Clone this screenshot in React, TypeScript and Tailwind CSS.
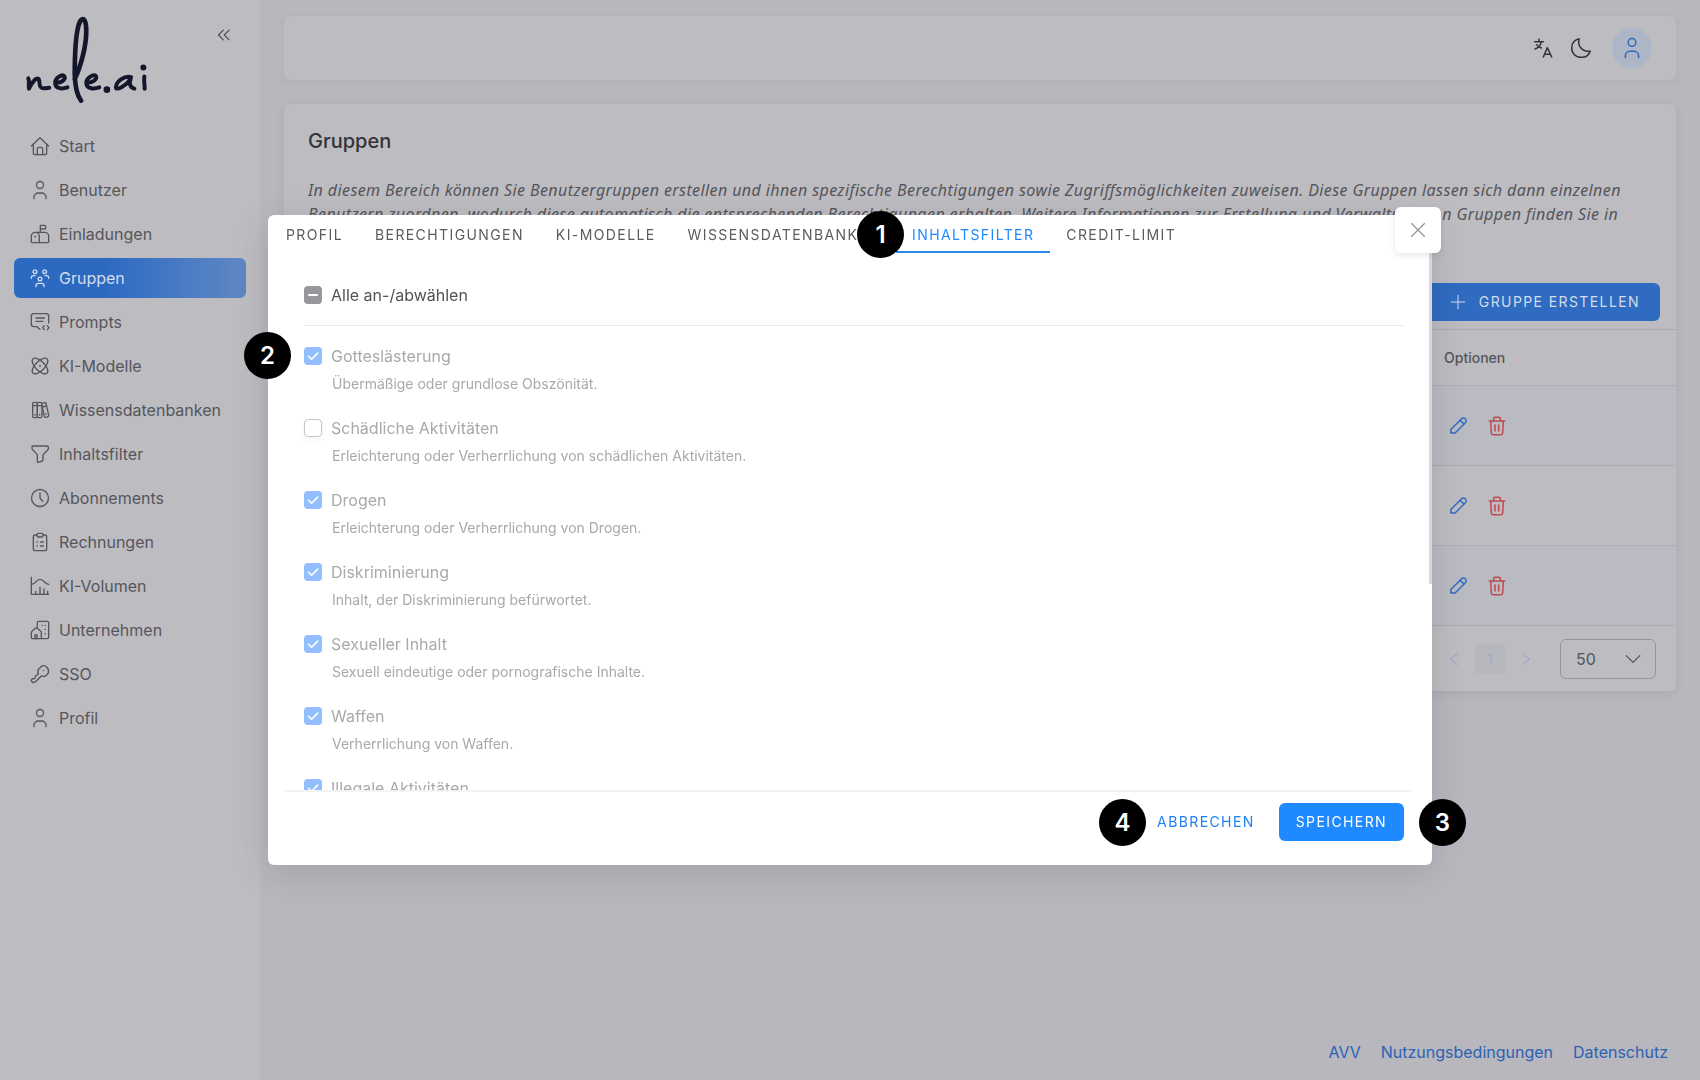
import React from "react";

type IconProps = { children: React.ReactNode; className?: string; strokeWidth?: number };

function Icon({ children, className = "size-[18px]", strokeWidth = 4 }: IconProps) {
  return (
    <svg
      viewBox="0 0 54 54"
      className={`shrink-0 overflow-visible ${className}`}
      fill="none"
      stroke="currentColor"
      strokeWidth={strokeWidth}
      strokeLinecap="round"
      strokeLinejoin="round"
      aria-hidden="true"
    >
      {children}
    </svg>
  );
}

const userShape = (
  <>
    <circle cx="27" cy="12" r="10.5" />
    <path d="M9 53v-4a13 13 0 0 1 13-13h10a13 13 0 0 1 13 13v4" />
  </>
);

const navItems: { label: string; icon: React.ReactNode; active?: boolean }[] = [
  {
    label: "Start",
    icon: (
      <>
        <path d="M1 27 27 2l26 25" />
        <path d="M7 22v25q0 6 6 6h28q6 0 6-6V22" />
        <path d="M19 53V35q0-4 4-4h8q4 0 4 4v18" />
      </>
    ),
  },
  { label: "Benutzer", icon: userShape },
  {
    label: "Einladungen",
    icon: (
      <>
        <path d="M13 22h29a11 11 0 0 1 11 11v17q0 3-3 3H4q-3 0-3-3V34a12 12 0 0 1 24 0v19" />
        <path d="M28 22V1h13q3 0 3 3v5q0 3-3 3H28" />
        <path d="M11 35h3" />
      </>
    ),
  },
  {
    label: "Gruppen",
    active: true,
    icon: (
      <>
        <circle cx="12" cy="8" r="5.5" />
        <circle cx="41" cy="8" r="5.5" />
        <circle cx="27" cy="30" r="5.5" />
        <path d="M1 28v-2q0-6 6-6h5M53 28v-2q0-6-6-6h-5M15 53v-3q0-7 7-7h10q7 0 7 7v3" />
      </>
    ),
  },
  {
    label: "Prompts",
    icon: (
      <>
        <path d="M53 30V10a8 8 0 0 0-8-8H9a8 8 0 0 0-8 8v23a8 8 0 0 0 8 8h8l10 8" />
        <path d="M15 15h25M15 25h20" />
        <path d="m40 38-5 6 5 6M49 38l5 6-5 6" />
      </>
    ),
  },
  {
    label: "KI-Modelle",
    icon: (
      <>
        <ellipse cx="27" cy="27" rx="30" ry="14" transform="rotate(45 27 27)" />
        <ellipse cx="27" cy="27" rx="30" ry="14" transform="rotate(-45 27 27)" />
        <circle cx="27" cy="27" r="1" />
      </>
    ),
  },
  {
    label: "Wissensdatenbanken",
    icon: (
      <>
        <rect x="5" y="4" width="14" height="46" rx="4" />
        <rect x="19" y="4" width="14" height="46" rx="4" />
        <path d="m33 8 8-3q3-1 4 2l8 35q1 4-3 5l-5 2q-4 1-5-3l-7-33" />
        <path d="M5 14h14M19 14h14M35 18l11-3M12 40v2M26 40v2M45 38v2" />
      </>
    ),
  },
  {
    label: "Inhaltsfilter",
    icon: <path d="M5 3h44q3 0 3 3v5q0 2-2 4L36 29v15q0 3-2 4l-12 4q-3 1-3-3V29L5 14q-2-2-2-4V5q0-2 2-2Z" />,
  },
  {
    label: "Abonnements",
    icon: (
      <>
        <circle cx="27" cy="27" r="25.5" />
        <path d="M27 12v15l8 10" />
      </>
    ),
  },
  {
    label: "Rechnungen",
    icon: (
      <>
        <path d="M18 6h-5q-6 0-6 6v35q0 6 6 6h28q6 0 6-6V12q0-6-6-6h-5" />
        <rect x="18" y="1" width="18" height="11" rx="4" />
        <path d="M18 27h1M29 27h8M18 39h1M29 39h8" />
      </>
    ),
  },
  {
    label: "KI-Volumen",
    icon: (
      <>
        <path d="M1 1v51h52" />
        <path d="M2 22q7-1 13-8t12-7 13 7 13 8" />
        <path d="M14 43v8M27 31v20M39 36v15M50 43v8" />
      </>
    ),
  },
  {
    label: "Unternehmen",
    icon: (
      <>
        <path d="M19 18V5q0-4 4-4h26q4 0 4 4v44q0 4-4 4H4q-3 0-3-3V35q0-2 2-4l10-9q3-2 6 0l10 9q2 2 2 4v18" />
        <path d="M12 53V42h6v11M33 13h1M42 13h1M42 25h1M42 38h1" />
      </>
    ),
  },
  {
    label: "SSO",
    icon: (
      <>
        <path d="M22 27q-4-9 2-16l6-6q9-7 17 1t5 18l-5 6q-7 7-16 3L16 48q-6 6-12 4-5-5-1-10l9-2 1-6Z" />
        <path d="M37 16h.5" />
      </>
    ),
  },
  { label: "Profil", icon: userShape },
];

const filters = [
  { label: "Gotteslästerung", text: "Übermäßige oder grundlose Obszönität.", checked: true },
  { label: "Schädliche Aktivitäten", text: "Erleichterung oder Verherrlichung von schädlichen Aktivitäten.", checked: false },
  { label: "Drogen", text: "Erleichterung oder Verherrlichung von Drogen.", checked: true },
  { label: "Diskriminierung", text: "Inhalt, der Diskriminierung befürwortet.", checked: true },
  { label: "Sexueller Inhalt", text: "Sexuell eindeutige oder pornografische Inhalte.", checked: true },
  { label: "Waffen", text: "Verherrlichung von Waffen.", checked: true },
  { label: "Illegale Aktivitäten", text: "", checked: true },
];

const tabs = ["Profil", "Berechtigungen", "KI-Modelle", "Wissensdatenbanken", "Inhaltsfilter", "Credit-Limit"];

function Logo() {
  return (
    <svg
      viewBox="77 48 365 262"
      className="h-[87px] w-[121px]"
      fill="none"
      stroke="#14172b"
      strokeWidth="12"
      strokeLinecap="round"
      strokeLinejoin="round"
      role="img"
      aria-label="nele.ai"
    >
      <path d="M84 236c4 10 0 21 2 31 8-17 20-34 28-30 8 5-3 29 16 29 8 0 12-1 17-2" />
      <path d="M167 248c14 3 31-8 26-18-7-8-28 3-28 20 1 19 22 18 37 13" />
      <path d="M224 238c17-35 39-108 34-160-3-29-16-27-23 0-9 34-11 108-11 146 1 36 6 62 19 79" strokeWidth="14" />
      <path d="M261 248c14 3 32-9 27-19-7-7-29 4-29 21 1 19 24 18 39 13" />
      <path d="M394 232c-19-5-44 11-46 31 2 12 32-6 45-26-6 13-3 26 11 30" />
      <path d="M434 230c-2 13 1 26 1 37" />
      <circle cx="321" cy="270" r="10" fill="#14172b" stroke="none" />
      <circle cx="431" cy="203" r="9" fill="#14172b" stroke="none" />
    </svg>
  );
}

function Marker({ n, className }: { n: number; className: string }) {
  return (
    <span
      className={`absolute z-20 flex size-[47px] items-center justify-center rounded-full bg-black font-['Inter',sans-serif] text-2xl font-semibold text-white ${className}`}
    >
      {n}
    </span>
  );
}

function Checkbox({ id, checked, mixed = false }: { id: string; checked: boolean; mixed?: boolean }) {
  const tone = mixed
    ? "bg-[#98989c]"
    : checked
      ? "bg-[#93bffd]"
      : "border border-[#c4c4c8] bg-white shadow-[0_2px_6px_rgba(0,0,0,0.05)]";
  return (
    <span className="grid size-[18px] shrink-0">
      <input
        id={id}
        type="checkbox"
        defaultChecked={checked}
        className={`col-start-1 row-start-1 size-[18px] appearance-none rounded ${tone}`}
      />
      {(checked || mixed) && (
        <svg
          viewBox="0 0 18 18"
          className="pointer-events-none col-start-1 row-start-1 size-[18px]"
          fill="none"
          stroke="white"
          strokeWidth={mixed ? 2 : 1.6}
          strokeLinecap="round"
          strokeLinejoin="round"
          aria-hidden="true"
        >
          <path d={mixed ? "M5 9h8" : "m4.6 9.3 3 3 6-6.2"} />
        </svg>
      )}
    </span>
  );
}

function Sidebar() {
  return (
    <aside className="w-[260px] shrink-0 bg-[#bdbcc1] px-3.5">
      <div className="flex items-start justify-between pt-4 pr-4 pl-3">
        <Logo />
        <button type="button" aria-label="Menü einklappen" className="mt-3 text-[#4c4c52]">
          <Icon className="h-3.5 w-3" strokeWidth={5}>
            <path d="M24 5 2 27l22 22M50 5 28 27l22 22" />
          </Icon>
        </button>
      </div>
      <nav className="mt-[23px] flex flex-col gap-1">
        {navItems.map((item) => (
          <a
            key={item.label}
            href="#"
            className={`flex h-10 items-center gap-2.5 rounded-md pl-[17px] text-base ${
              item.active ? "bg-linear-to-r from-[#2c6ac2] from-40% to-[#6088c4] text-[#d3dcea]" : "text-[#56565b]"
            }`}
          >
            <Icon>{item.icon}</Icon>
            {item.label}
          </a>
        ))}
      </nav>
    </aside>
  );
}

function TopBar() {
  return (
    <header className="flex h-16 items-center justify-end rounded-md bg-[#bdbcc1] pr-6 text-[#333338] shadow-[0_2px_8px_rgba(60,50,90,0.05)]">
      <button type="button" aria-label="Sprache" className="mr-[19px]">
        <Icon strokeWidth={4.5}>
          <path d="M2 8h26M15 1v7M22 8c-2 12-9 19-19 22M8 17c3 5 8 8 14 10" />
          <path d="m28 54 12-28 13 28M32 46h17" />
        </Icon>
      </button>
      <button type="button" aria-label="Dunkelmodus" className="mr-[21px]">
        <Icon className="size-5" strokeWidth={4}>
          <path d="M22 2C17 20 28 37 52 36 47 47 37 53 27 52 12 52 1 40 2 26 2 14 10 4 22 2Z" />
        </Icon>
      </button>
      <button type="button" aria-label="Konto" className="flex size-10 items-center justify-center rounded-full bg-[#adb6c6] text-[#2c6ac2]">
        <Icon className="size-5">{userShape}</Icon>
      </button>
    </header>
  );
}

function GroupsCard() {
  return (
    <section className="mt-6 rounded-md bg-[#bdbcc1] shadow-[0_3px_10px_rgba(60,50,90,0.09)]">
      <div className="px-6 pt-[23px]">
        <h1 className="text-xl leading-7 font-medium text-[#333338]">Gruppen</h1>
        <p className="mt-[23px] h-[72px] overflow-hidden font-['Noto_Sans','Inter',sans-serif] text-base leading-6 tracking-wide whitespace-nowrap text-[#55555a] italic">
          In diesem Bereich können Sie Benutzergruppen erstellen und ihnen spezifische Berechtigungen sowie
          Zugriffsmöglichkeiten zuweisen. Diese Gruppen lassen sich dann einzelnen
          <br />
          Benutzern zuordnen, wodurch diese automatisch die entsprechenden Berechtigungen erhalten. Weitere
          Informationen zur Erstellung und Verwaltung von Gruppen finden Sie in
        </p>
      </div>
      <div className="mt-[33px] flex justify-end pr-4">
        <button
          type="button"
          className="flex h-[38px] items-center gap-3.5 rounded-md bg-[#2f6cc1] pr-5 pl-7 text-sm tracking-widest text-[#d3dcea] uppercase"
        >
          <Icon className="size-3.5" strokeWidth={4}>
            <path d="M27 1v52M1 27h52" />
          </Icon>
          Gruppe erstellen
        </button>
      </div>
      <table className="mt-2 w-full border-collapse">
        <thead>
          <tr className="h-14 border-y border-[#abaab0]">
            <th scope="col" className="pl-[1160px] text-left text-sm font-medium text-[#55555a]">
              Optionen
            </th>
          </tr>
        </thead>
        <tbody>
          {[0, 1, 2].map((row) => (
            <tr key={row} className="h-20 border-b border-[#abaab0] odd:bg-[#b9bac2]">
              <td className="pl-[1166px]">
                <div className="flex items-center gap-[21px]">
                  <button type="button" aria-label="Bearbeiten" className="text-[#2c6ac2]">
                    <Icon className="size-[17px]" strokeWidth={4.5}>
                      <path d="M3 51V39L36 6q7-6 13 0 5 6 0 12L16 51Z" />
                      <path d="m32 10 12 12" />
                    </Icon>
                  </button>
                  <button type="button" aria-label="Löschen" className="text-[#be4a50]">
                    <Icon className="size-[18px]" strokeWidth={4.5}>
                      <path d="M4 12h46M17 12V5q0-4 4-4h12q4 0 4 4v7M8 12l2 36q0 5 5 5h24q5 0 5-5l2-36M21 24v18M32 24v18" />
                    </Icon>
                  </button>
                </div>
              </td>
            </tr>
          ))}
        </tbody>
      </table>
      <div className="flex h-[65px] items-center justify-end pr-5 text-[#9aa8c6]">
        <button type="button" aria-label="Zurück" className="flex size-[30px] items-center justify-center rounded">
          <Icon className="size-3.5" strokeWidth={4}>
            <path d="M40 5 14 27l26 22" />
          </Icon>
        </button>
        <button type="button" className="ml-1.5 flex size-[30px] items-center justify-center rounded bg-[#b7b7be] text-xs">
          1
        </button>
        <button type="button" aria-label="Weiter" className="ml-1.5 flex size-[30px] items-center justify-center rounded">
          <Icon className="size-3.5" strokeWidth={4}>
            <path d="m14 5 26 22-26 22" />
          </Icon>
        </button>
        <div className="ml-[19px] grid text-[#55555a]">
          <select
            aria-label="Einträge pro Seite"
            className="col-start-1 row-start-1 h-10 w-24 appearance-none rounded-md border border-[#96959b] bg-transparent pl-[15px] text-base"
          >
            <option>50</option>
          </select>
          <Icon className="pointer-events-none col-start-1 row-start-1 mr-4 size-3.5 self-center justify-self-end" strokeWidth={5}>
            <path d="m1 14 26 26 26-26" />
          </Icon>
        </div>
      </div>
    </section>
  );
}

function FilterDialog() {
  return (
    <div className="fixed inset-0 flex items-center justify-center">
      <div
        role="dialog"
        aria-modal="true"
        aria-label="Inhaltsfilter"
        className="relative flex max-h-[650px] w-full max-w-[1164px] flex-col rounded-md bg-white shadow-[0_8px_36px_rgba(0,0,0,0.12)]"
      >
        <button
          type="button"
          aria-label="Schließen"
          className="absolute -top-2 -right-[9px] z-10 flex size-[46px] items-center justify-center rounded-md bg-white text-[#929297] shadow-[0_2px_6px_rgba(0,0,0,0.1)]"
        >
          <Icon className="size-3.5" strokeWidth={4.5}>
            <path d="m2 2 50 50M52 2 2 52" />
          </Icon>
        </button>
        <div className="absolute top-9 right-0 h-[333px] w-[3px] bg-[#d8d8dc]" />
        <div className="min-h-0 overflow-hidden">
          <div role="tablist" className="flex h-[38px] items-stretch pl-0.5">
            {tabs.map((tab) => {
              const selected = tab === "Inhaltsfilter";
              return (
                <button
                  key={tab}
                  type="button"
                  role="tab"
                  aria-selected={selected}
                  className={`border-b-2 px-4 pt-[3px] text-sm tracking-widest uppercase ${
                    selected ? "border-[#2a8ae6] text-[#1f87ff]" : "border-transparent text-[#5c5c60]"
                  }`}
                >
                  {tab}
                </button>
              );
            })}
          </div>
          <div className="pt-[30px] pr-7 pl-9">
            <div className="flex h-6 items-center gap-[9px]">
              <Checkbox id="all" checked={false} mixed />
              <label htmlFor="all" className="text-base text-[#525257]">
                Alle an-/abwählen
              </label>
            </div>
            <hr className="mt-[18px] border-[#ececee]" />
            <ul className="mt-[18px] mb-[-44px] flex flex-col">
              {filters.map((filter, i) => (
                <li key={filter.label} className="h-[72px] text-[#a9a9ac]">
                  <div className="flex h-6 items-center gap-[9px]">
                    <Checkbox id={`filter-${i}`} checked={filter.checked} />
                    <label htmlFor={`filter-${i}`} className="text-base">
                      {filter.label}
                    </label>
                  </div>
                  <p className="mt-1.5 pl-7 text-sm leading-5">{filter.text}</p>
                </li>
              ))}
            </ul>
          </div>
        </div>
        <div className="shrink-0 pr-5 pl-4">
          <div className="flex h-[75px] items-start justify-end gap-2 border-t-2 border-[#f3f3f4] pt-[11px] pr-2">
            <button type="button" className="h-[38px] px-4 text-sm tracking-widest text-[#1f80f0] uppercase">
              Abbrechen
            </button>
            <button type="button" className="h-[38px] rounded-md bg-[#1f8aff] px-[17px] text-sm tracking-widest text-white uppercase">
              Speichern
            </button>
          </div>
        </div>
        <Marker n={1} className="-top-1 left-[589px]" />
        <Marker n={2} className="top-[117px] -left-6" />
        <Marker n={3} className="right-[-34px] bottom-[19px]" />
        <Marker n={4} className="right-[286px] bottom-[19px]" />
      </div>
    </div>
  );
}

export default function App() {
  return (
    <div className="flex min-h-screen bg-[#b8b7bd] font-['Inter','Liberation_Sans',sans-serif]">
      <Sidebar />
      <div className="flex min-w-0 grow flex-col px-6 pt-4">
        <TopBar />
        <GroupsCard />
        <footer className="mt-auto flex justify-end gap-5 pr-2 pb-4 text-base text-[#2c62b4]">
          <a href="#">AVV</a>
          <a href="#">Nutzungsbedingungen</a>
          <a href="#">Datenschutz</a>
        </footer>
      </div>
      <FilterDialog />
    </div>
  );
}
